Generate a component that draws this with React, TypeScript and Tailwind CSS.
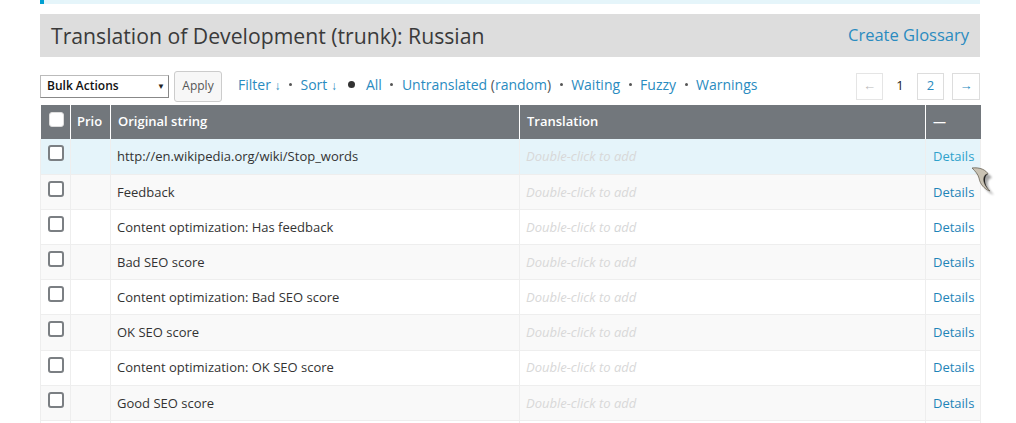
const ROWS = [
  "http://en.wikipedia.org/wiki/Stop_words",
  "Feedback",
  "Content optimization: Has feedback",
  "Bad SEO score",
  "Content optimization: Bad SEO score",
  "OK SEO score",
  "Content optimization: OK SEO score",
  "Good SEO score",
];

function Box({ header = false }: { header?: boolean }) {
  return (
    <span
      className={
        header
          ? "inline-block h-[15px] w-[15px] rounded-[3px] border border-[#ddd] bg-white"
          : "inline-block h-[16px] w-[16px] rounded-[3px] border-2 border-[#7b7f83] bg-white"
      }
    />
  );
}

function Sep() {
  return <span className="mx-[8.5px] inline-block h-[3px] w-[3px] rounded-full bg-[#555]" />;
}

function Cursor() {
  return (
    <svg className="absolute left-[968px] top-[164px]" width="34" height="34" viewBox="0 0 34 34">
      <defs>
        <filter id="sh" x="-30%" y="-30%" width="160%" height="160%">
          <feGaussianBlur stdDeviation="1.2" />
        </filter>
      </defs>
      <path d="M6 6 C14 5 20 8 22 12 C19 12 17 15 18 20 C19 24 22 27 24 29 C18 27 14 22 13 16 C12 12 9 9 6 6 Z" fill="#000" opacity="0.35" filter="url(#sh)" transform="translate(2 2)" />
      <path d="M4 4 C12 3 18 6 20 10 C17 10 15 13 16 18 C17 22 20 25 22 27 C16 25 12 20 11 14 C10 10 7 7 4 4 Z" fill="#c9c2b3" stroke="#6b6558" strokeWidth="0.8" />
      <path d="M20 10 C17 10 15 13 16 18 C17 22 20 25 22 27 C18 23 17 19 17 16 C17 13 18 11 20 10 Z" fill="#222" />
    </svg>
  );
}

export default function App() {
  return (
    <div className="relative h-[423px] w-[1016px] overflow-hidden bg-white font-['Open_Sans',sans-serif] text-[13px] text-[#333]">
      <div className="mx-[40px] w-[940px]">
        <div className="h-[4px] border-l-4 border-[#00a0d2] bg-[#e5f5fa]" />
        <div className="mt-[10px] flex h-[43px] items-center justify-between bg-[#dddddd] pl-[11px] pr-[11px]">
          <h2 className="text-[21.2px] leading-none text-[#3a3a3a]">Translation of Development (trunk): Russian</h2>
          <a className="text-[16.5px] leading-none text-[#2a8bc0]">Create Glossary</a>
        </div>

        <div className="mt-[13px] flex h-[32px] items-center">
          <div className="flex h-[23px] w-[129px] items-center justify-between border border-[#bbb] border-b-[#888] border-r-[#888] bg-white pl-[6px] pr-[3px] text-[12px] font-semibold text-[#111]">
            <span>Bulk Actions</span>
            <span className="text-[8px] text-[#222]">▼</span>
          </div>
          <button className="ml-[5px] h-[31px] w-[48px] rounded-[3px] border border-[#ccc] bg-[#f7f7f7] text-[12px] text-[#555]">
            Apply
          </button>
          <div className="ml-[16px] -mt-[3px] flex items-center text-[14px] text-[#2a8bc0]">
            <a>
              Filter <span className="text-[12px]">↓</span>
            </a>
            <Sep />
            <a>
              Sort <span className="text-[12px]">↓</span>
            </a>
            <span className="mx-[11px] inline-block h-[7px] w-[7px] rounded-full bg-[#333]" />
            <a>All</a>
            <Sep />
            <a>
              Untranslated <span className="text-[#555]">(</span>random<span className="text-[#555]">)</span>
            </a>
            <Sep />
            <a>Waiting</a>
            <Sep />
            <a>Fuzzy</a>
            <Sep />
            <a>Warnings</a>
          </div>
          <div className="ml-auto flex items-center text-[13px]">
            <span className="flex h-[27px] w-[27px] items-center justify-center border border-[#e5e5e5] text-[13px] text-[#bbb]">←</span>
            <span className="flex h-[27px] w-[34px] items-center justify-center text-[#222]">1</span>
            <span className="flex h-[27px] w-[27px] items-center justify-center border border-[#ddd] text-[#2a8bc0]">2</span>
            <span className="ml-[8px] flex h-[27px] w-[28px] items-center justify-center border border-[#ddd] text-[13px] text-[#2a8bc0]">→</span>
          </div>
        </div>

        <table className="mt-[3px] w-[940px] table-fixed border-collapse">
          <colgroup>
            <col className="w-[30px]" />
            <col className="w-[40px]" />
            <col className="w-[409px]" />
            <col className="w-[406px]" />
            <col className="w-[55px]" />
          </colgroup>
          <thead>
            <tr className="h-[34px] bg-[#72777c] text-left text-white">
              <th className="border-r border-white pl-[8px] pt-[1px] align-middle">
                <Box header />
              </th>
              <th className="border-r border-white px-[6px] font-semibold">Prio</th>
              <th className="border-r border-white px-[7px] font-semibold">Original string</th>
              <th className="border-r border-white px-[7px] font-semibold">Translation</th>
              <th className="px-[7px] font-semibold">—</th>
            </tr>
          </thead>
          <tbody>
            {ROWS.map((r, i) => (
              <tr
                key={r}
                className={
                  "h-[35.2px] border-b border-[#eee] " +
                  (i === 0 ? "bg-[#e5f4fa]" : i % 2 === 1 ? "bg-[#f9f9f9]" : "bg-white")
                }
              >
                <td className="border-l border-r border-[#eee] pl-[7px] align-top pt-[6px]">
                  <Box />
                </td>
                <td className="border-r border-[#eee]" />
                <td className="border-r border-[#eee] px-[6px] pt-[1px]">{r}</td>
                <td className="border-r border-[#eee] px-[6px] pt-[1px] italic text-[#d8d8d8]">Double-click to add</td>
                <td className={"border-r border-[#eee] px-[7px] pt-[1px] " + (i === 0 ? "text-[#2ea2cc]" : "text-[#1e84b8]")}>
                  Details
                </td>
              </tr>
            ))}
            <tr className="h-[35px] bg-white">
              <td className="border-l border-r border-[#eee]" />
              <td className="border-r border-[#eee]" />
              <td className="border-r border-[#eee]" />
              <td className="border-r border-[#eee]" />
              <td className="border-r border-[#eee]" />
            </tr>
          </tbody>
        </table>
      </div>
      <Cursor />
    </div>
  );
}
